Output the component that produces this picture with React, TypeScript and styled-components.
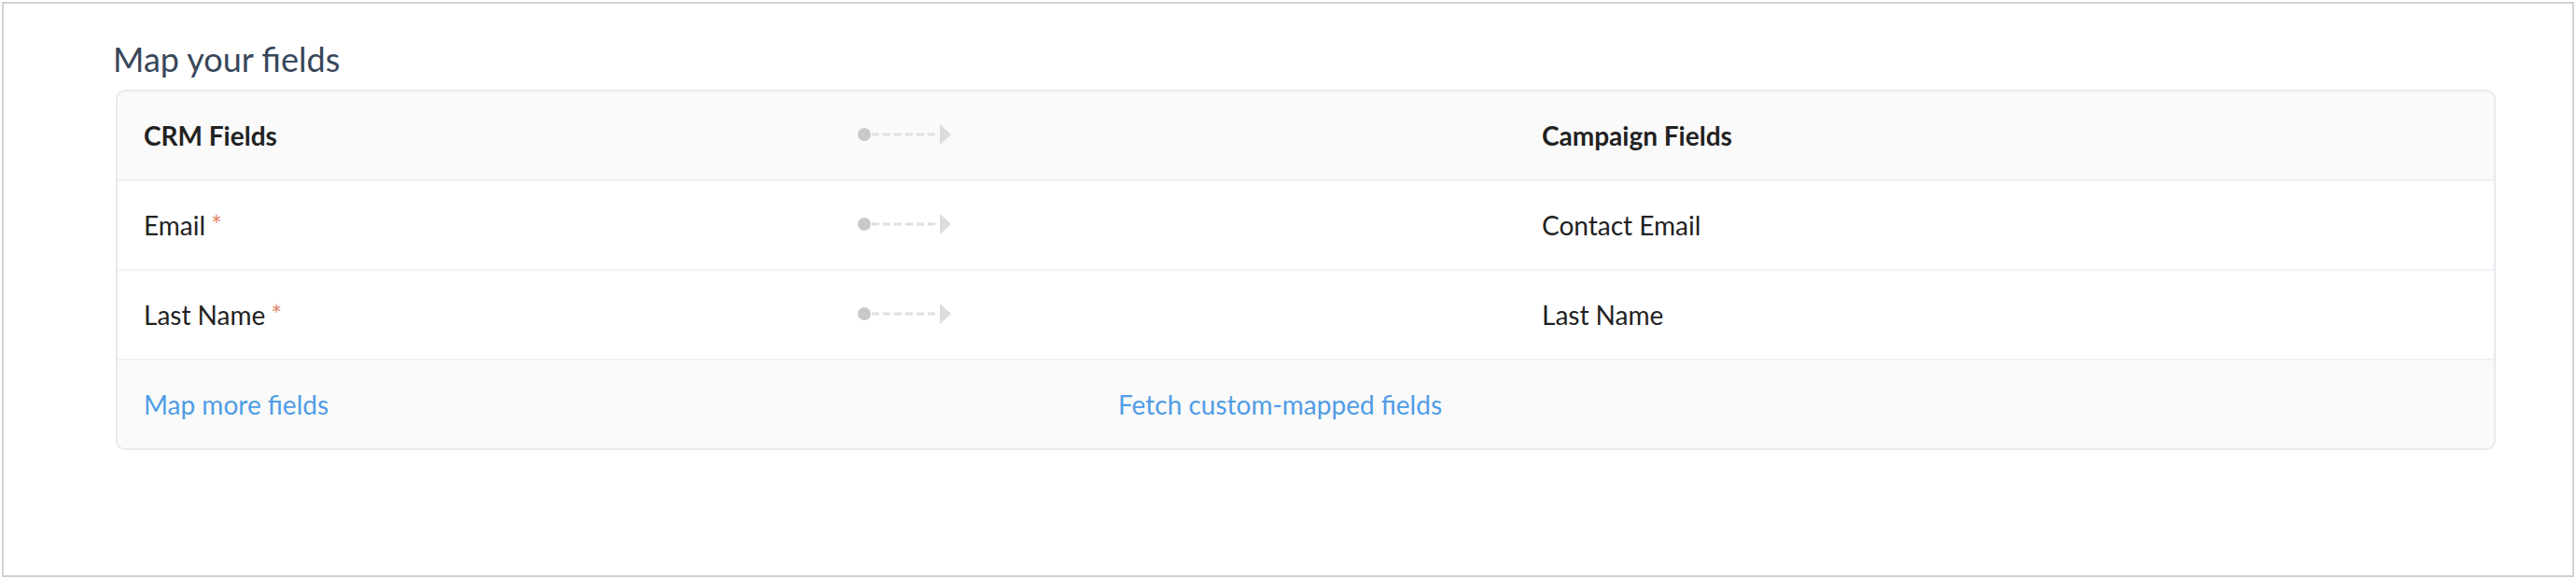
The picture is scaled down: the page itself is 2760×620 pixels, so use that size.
import React from "react";
import styled, { createGlobalStyle } from "styled-components";

const GlobalStyle = createGlobalStyle`
  html, body {
    margin: 0;
    padding: 0;
    background: #ffffff;
  }
  body {
    font-family: Lato, "Open Sans", "Liberation Sans", sans-serif;
    -webkit-font-smoothing: antialiased;
  }
  * { box-sizing: border-box; }
`;

const Frame = styled.div`
  margin: 2px;
  height: 616px;
  border: 2px solid #cdd2d8;
  background: #ffffff;
  padding: 38px 82px 0 120px;
`;

const Title = styled.h2`
  margin: 0 0 11px -3px;
  font-size: 36px;
  line-height: 43px;
  font-weight: 400;
  color: #38475a;
`;

const Card = styled.div`
  border: 2px solid #e6eaef;
  border-radius: 10px;
  overflow: hidden;
  background: #ffffff;
`;

const Row = styled.div<{ $tinted?: boolean }>`
  display: grid;
  grid-template-columns: 765px 733px 1fr;
  align-items: center;
  height: 96px;
  background: ${(p) => (p.$tinted ? "#fafafa" : "#ffffff")};
  border-bottom: 2px solid #eef2f6;
`;

const Cell = styled.div<{ $bold?: boolean }>`
  padding-left: 28px;
  font-size: 28px;
  line-height: 34px;
  font-weight: ${(p) => (p.$bold ? 700 : 400)};
  color: #222222;
  display: flex;
  align-items: center;
`;

const Required = styled.span`
  color: #e3896c;
  margin-left: 6px;
`;

const Footer = styled.div`
  display: grid;
  grid-template-columns: 1044px 1fr;
  align-items: center;
  height: 94px;
  padding-left: 28px;
  background: #fafafa;
`;

const LinkText = styled.a`
  font-size: 28px;
  line-height: 34px;
  color: #509ce6;
  text-decoration: none;
  cursor: pointer;
`;

const MapArrow = () => (
  <svg width="100" height="22" viewBox="0 0 100 22" style={{ marginTop: -3 }}>
    <circle cx="7" cy="11" r="7" fill="#c9c9c9" />
    <line
      x1="15"
      y1="11"
      x2="87"
      y2="11"
      stroke="#e0e0e0"
      strokeWidth="3"
      strokeDasharray="8 4"
    />
    <polygon points="88,0 100,11 88,22" fill="#dcdcdc" />
  </svg>
);

type Mapping = { crm: string; campaign: string; required?: boolean };

const mappings: Mapping[] = [
  { crm: "Email", campaign: "Contact Email", required: true },
  { crm: "Last Name", campaign: "Last Name", required: true },
];

export default function App() {
  return (
    <>
      <GlobalStyle />
      <Frame>
        <Title>Map your fields</Title>
        <Card>
          <Row $tinted>
            <Cell $bold>CRM Fields</Cell>
            <Cell>
              <MapArrow />
            </Cell>
            <Cell $bold>Campaign Fields</Cell>
          </Row>
          {mappings.map((m) => (
            <Row key={m.crm}>
              <Cell>
                <span>
                  {m.crm}
                  {m.required && <Required>*</Required>}
                </span>
              </Cell>
              <Cell>
                <MapArrow />
              </Cell>
              <Cell>{m.campaign}</Cell>
            </Row>
          ))}
          <Footer>
            <LinkText>Map more fields</LinkText>
            <LinkText>Fetch custom-mapped fields</LinkText>
          </Footer>
        </Card>
      </Frame>
    </>
  );
}
